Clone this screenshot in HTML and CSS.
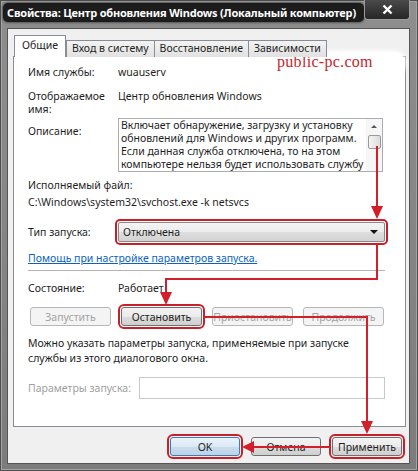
FILE: index.html
```html
<!DOCTYPE html>
<html lang="ru">
<head>
    <meta charset="UTF-8">
    <title>Свойства: Центр обновления Windows</title>
    <link rel="stylesheet" href="styles.css">
</head>
<body>

<div class="window">
    <div class="titlebar">
        <div class="title">Свойства: Центр обновления Windows (Локальный компьютер)</div>
        <div class="close">
            <svg width="11" height="11" viewBox="0 0 11 11"><path d="M1.5 1.5 L9.5 9.5 M9.5 1.5 L1.5 9.5" stroke="#fff" stroke-width="2.4"/></svg>
        </div>
    </div>

    <div class="client">
        <div class="tabs">
            <div class="tab active">Общие</div>
            <div class="tab">Вход в систему</div>
            <div class="tab">Восстановление</div>
            <div class="tab">Зависимости</div>
        </div>

        <div class="panel">
            <div class="row row-name">
                <span class="label">Имя службы:</span>
                <span>wuauserv</span>
            </div>
            <div class="row row-display">
                <span class="label">Отображаемое<br>имя:</span>
                <span>Центр обновления Windows</span>
            </div>
            <div class="row row-desc">
                <span class="label">Описание:</span>
                <div class="desc">
                    <div class="desc-text">Включает обнаружение, загрузку и установку<br>обновлений для Windows и других программ.<br>Если данная служба отключена, то на этом<br>компьютере нельзя будет использовать службу</div>
                    <div class="scroll">
                        <div class="scroll-up"></div>
                        <div class="thumb"></div>
                    </div>
                </div>
            </div>
            <div class="exe-label">Исполняемый файл:</div>
            <div class="exe-path">C:\Windows\system32\svchost.exe -k netsvcs</div>
            <div class="row row-type">
                <span class="label">Тип запуска:</span>
                <div class="combo marked">
                    <span>Отключена</span>
                    <span class="combo-arrow"></span>
                </div>
            </div>
            <a class="help" href="#">Помощь при настройке параметров запуска.</a>
            <div class="sep"></div>
            <div class="row row-state">
                <span class="label">Состояние:</span>
                <span>Работает</span>
            </div>
            <div class="state-buttons">
                <button class="btn" disabled>Запустить</button>
                <button class="btn marked">Остановить</button>
                <button class="btn" disabled>Приостановить</button>
                <button class="btn" disabled>Продолжить</button>
            </div>
            <p class="note">Можно указать параметры запуска, применяемые при запуске<br>службы из этого диалогового окна.</p>
            <div class="row row-params">
                <span class="params-label">Параметры запуска:</span>
                <div class="params-input"></div>
            </div>
        </div>

        <div class="footer">
            <button class="btn btn-default marked">OK</button>
            <button class="btn">Отмена</button>
            <button class="btn marked">Применить</button>
        </div>
    </div>

    <div class="watermark">public-pc.com</div>

    <!-- red hint arrows drawn over the dialog -->
    <svg class="arrows" width="418" height="471" viewBox="0 0 418 471">
        <g fill="none" stroke="#d21f2a" stroke-width="2">
            <path d="M377 146 V208"/>
            <path d="M377 244 V279 H166 V294"/>
            <path d="M203 317 H367 V423"/>
            <path d="M330 447 H252"/>
        </g>
        <g fill="#d21f2a">
            <polygon points="371,206 383,206 377,219"/>
            <polygon points="160,292 172,292 166,305"/>
            <polygon points="361,421 373,421 367,434"/>
            <polygon points="254,441 254,453 242,447"/>
        </g>
    </svg>
</div>

</body>
</html>
```

FILE: styles.css
```css
body {
    margin: 0;
    font-family: "Noto Sans", sans-serif;
    font-size: 10.5px;
    color: #1e1e1e;
}
.window {
    position: relative;
    width: 418px;
    height: 471px;
    box-sizing: border-box;
    padding: 0 8px 7px 7px;
    display: flex;
    flex-direction: column;
    background: linear-gradient(#8e8e8e, #7c7c7c);
    box-shadow: inset 0 0 0 1px #4e4e4e, inset 0 0 0 2px #a4a4a4;
}
.titlebar {
    height: 28px;
    display: flex;
    align-items: flex-start;
    flex-shrink: 0;
}
.title {
    width: 361px;
    box-sizing: border-box;
    margin: 3px 0 0 -4px;
    padding: 0 4px;
    height: 19px;
    line-height: 19px;
    background: #1c1c1c;
    border-radius: 5px;
    box-shadow: 0 0 3px #1c1c1c;
    color: #fff;
    font-weight: bold;
    font-size: 11px;
    letter-spacing: -0.2px;
    white-space: nowrap;
    overflow: hidden;
}
.close {
    margin-left: auto;
    width: 46px;
    height: 20px;
    box-sizing: border-box;
    background: linear-gradient(#4a4a4a, #262626);
    border: 1px solid #9a9a9a;
    border-top: none;
    border-radius: 0 0 4px 4px;
    display: flex;
    align-items: center;
    justify-content: center;
}
.client {
    flex: 1;
    background: #f0f0f0;
    border: 1px solid #555;
    padding: 7px 3px 7px 5px;
    display: flex;
    flex-direction: column;
}
.tabs {
    display: flex;
    align-items: flex-end;
    height: 21px;
    margin: 0 0 -1px 1px;
    position: relative;
    z-index: 1;
}
.tab {
    height: 16px;
    line-height: 15px;
    padding: 0 5px;
    border: 1px solid #898c95;
    border-bottom: none;
    margin-right: -1px;
    background: linear-gradient(#f3f3f3, #e1e1e1);
    white-space: nowrap;
}
.tab.active {
    height: 21px;
    line-height: 19px;
    padding: 0 7px;
    background: #fff;
    margin-right: 0;
}
.panel {
    width: 393px;
    height: 371px;
    box-sizing: border-box;
    background: #fff;
    border: 1px solid #898c95;
    padding: 8px 14px 0 14px;
    line-height: 15px;
}
.row {
    display: flex;
    align-items: flex-start;
}
.label {
    width: 90px;
    flex-shrink: 0;
}
.row-display {
    margin-top: 10px;
    line-height: 13px;
}
.row-desc {
    margin-top: 2px;
}
.row-desc .label {
    padding-top: 6px;
}
.desc {
    position: relative;
    width: 265px;
    height: 54px;
    box-sizing: border-box;
    border: 1px solid #abadb3;
    overflow: hidden;
}
.desc-text {
    padding: 0 0 0 2px;
    line-height: 13px;
    white-space: nowrap;
}
.scroll {
    position: absolute;
    top: 0;
    right: 0;
    width: 16px;
    height: 100%;
    background: #f6f6f6;
}
.scroll-up {
    margin: 6px auto 0;
    width: 0;
    height: 0;
    border-left: 3px solid transparent;
    border-right: 3px solid transparent;
    border-bottom: 3px solid #555;
}
.thumb {
    margin: 7px auto 0;
    width: 13px;
    height: 14px;
    box-sizing: border-box;
    border: 1px solid #9a9a9a;
    border-radius: 2px;
    background: linear-gradient(90deg, #f4f4f4, #dcdcdc);
}
.exe-label {
    margin-top: 6px;
}
.exe-path {
    margin-top: 2px;
}
.row-type {
    margin-top: 12px;
    align-items: center;
}
.combo {
    width: 267px;
    height: 20px;
    box-sizing: border-box;
    border: 1px solid #8a8a8a;
    border-radius: 2px;
    background: linear-gradient(#f4f4f4 0%, #ececec 50%, #dedede 51%, #d2d2d2 100%);
    display: flex;
    align-items: center;
    justify-content: space-between;
    padding: 0 6px 0 4px;
}
.combo-arrow {
    width: 0;
    height: 0;
    border-left: 4px solid transparent;
    border-right: 4px solid transparent;
    border-top: 4px solid #111;
}
.marked {
    outline: 2px solid #c8202b;
    outline-offset: 1px;
}
.help {
    display: block;
    margin-top: 9px;
    color: #0a62c4;
}
.sep {
    margin-top: 4px;
    height: 1px;
    width: 357px;
    background: #b4b4b4;
}
.row-state {
    margin-top: 10px;
}
.state-buttons {
    display: flex;
    gap: 10px;
    margin: 11px 0 0 2px;
}
.state-buttons .btn {
    width: 81px;
}
.btn {
    height: 19px;
    width: 70px;
    padding: 0;
    box-sizing: border-box;
    border: 1px solid #707070;
    border-radius: 3px;
    background: linear-gradient(#f3f3f3 0%, #ebebeb 50%, #dddddd 51%, #cfcfcf 100%);
    font-family: "Noto Sans", sans-serif;
    font-size: 10.5px;
    color: #1e1e1e;
}
.btn:disabled {
    border-color: #b4b8bb;
    background: #f4f4f4;
    color: #a3a3a3;
}
.btn-default {
    border-color: #3c7fb1;
    background: linear-gradient(#eaf3fa 0%, #dbe9f5 50%, #c9dded 51%, #bcd3e6 100%);
}
.note {
    margin: 10px 0 0;
}
.row-params {
    margin-top: 11px;
    align-items: center;
}
.params-label {
    width: 111px;
    flex-shrink: 0;
    color: #a0a0a0;
}
.params-input {
    width: 246px;
    height: 22px;
    box-sizing: border-box;
    border: 1px solid #c9c9c9;
    background: #fff;
}
.footer {
    display: flex;
    justify-content: flex-end;
    gap: 11px;
    margin-top: 10px;
    padding-right: 4px;
}
.watermark {
    position: absolute;
    left: 263px;
    top: 52px;
    width: 141px;
    height: 21px;
    box-sizing: border-box;
    padding-left: 14px;
    background: #fff;
    border-radius: 10px;
    box-shadow: 0 0 4px 2px rgba(255, 255, 255, 0.9);
    font-family: "Liberation Serif", serif;
    font-size: 16px;
    line-height: 20px;
    color: #c4262e;
    letter-spacing: 0.3px;
}
.arrows {
    position: absolute;
    top: 0;
    left: 0;
    pointer-events: none;
}
```
